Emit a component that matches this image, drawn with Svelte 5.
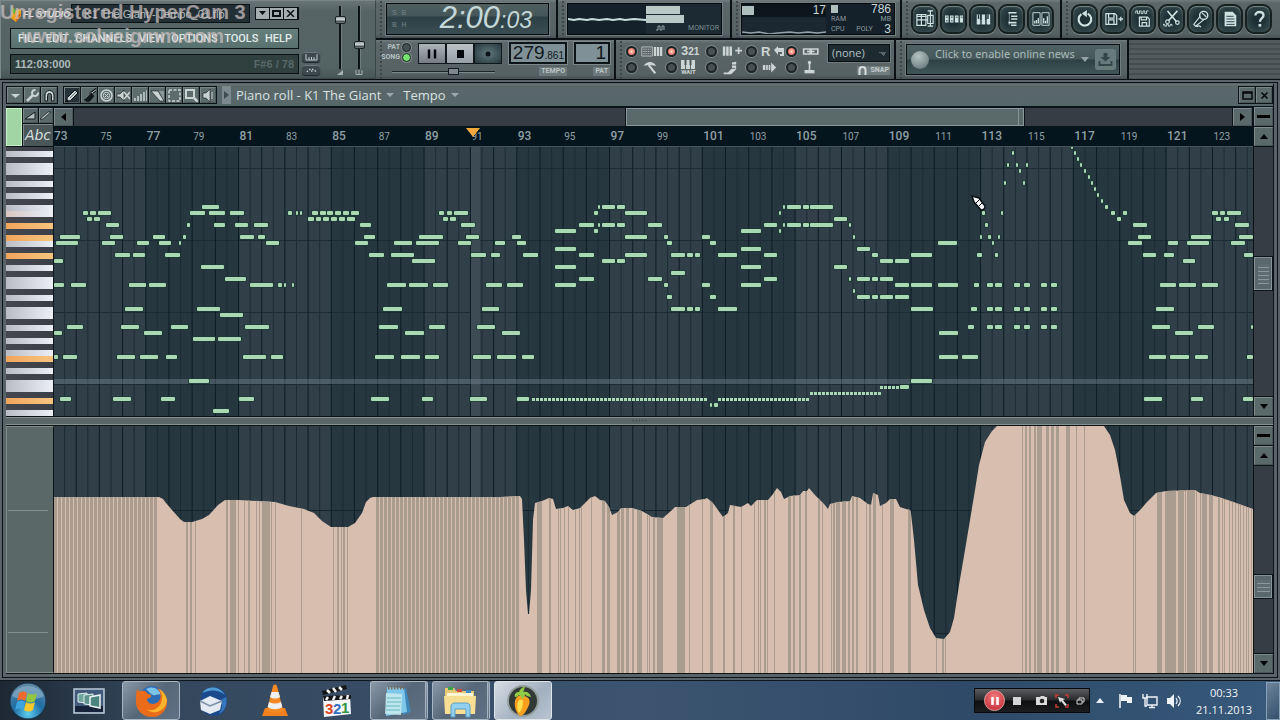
<script>
  // Key rows from the top of the visible range: w white, k black, o held, t tinted
  const keys = 'kwkwwkwkwkwtkokowkokwkwwkwkwwkwkwkwokwkwwkokw'.split('');

  const chordA = [[987, 993], [995, 1002], [1014, 1020], [1024, 1030], [1041, 1047], [1051, 1057]];
  const rows = {
    147: [[1071, 1072]],
    153: [[1012, 1014], [1074, 1075]],
    159: [[1077, 1078]],
    165: [[1007, 1008], [1016, 1017], [1026, 1028], [1080, 1082]],
    171: [[1019, 1020], [1084, 1085]],
    177: [[1088, 1089]],
    183: [[1004, 1005], [1023, 1025], [1091, 1092]],
    189: [[1094, 1096]],
    195: [[1097, 1099]],
    201: [[1101, 1103]],
    207: [[202, 219], [598, 600], [602, 615], [617, 625], [783, 785], [787, 801], [803, 809], [810, 833], [1105, 1108]],
    213: [[83, 88], [90, 96], [98, 111], [190, 205], [209, 225], [230, 244], [288, 292], [296, 298], [300, 301], [312, 318], [320, 326], [327, 333], [335, 341], [343, 349], [351, 359], [439, 444], [447, 452], [454, 468], [594, 598], [625, 647], [779, 781], [982, 985], [1001, 1003], [1111, 1115], [1123, 1127], [1212, 1218], [1220, 1225], [1227, 1241]],
    219: [[87, 92], [94, 100], [308, 314], [316, 321], [323, 329], [331, 337], [339, 345], [347, 355], [443, 448], [450, 456], [834, 847], [1117, 1121], [1216, 1221], [1224, 1229]],
    225: [[106, 119], [187, 190], [214, 225], [235, 248], [254, 268], [360, 371], [461, 475], [579, 594], [598, 600], [602, 615], [617, 625], [648, 662], [764, 777], [783, 785], [787, 801], [803, 809], [810, 833], [849, 851], [985, 988], [1133, 1147], [1235, 1249]],
    231: [[555, 576], [594, 598], [741, 761], [779, 781]],
    237: [[60, 80], [110, 123], [153, 165], [183, 186], [240, 254], [258, 265], [364, 375], [419, 443], [466, 479], [512, 521], [625, 647], [664, 668], [702, 710], [853, 855], [980, 982], [988, 991], [998, 999], [1138, 1151], [1191, 1211], [1239, 1253]],
    243: [[56, 78], [102, 115], [137, 149], [159, 171], [179, 181], [266, 279], [355, 368], [394, 412], [416, 439], [458, 471], [495, 505], [517, 526], [667, 672], [710, 716], [938, 957], [992, 994], [1128, 1142], [1168, 1178], [1187, 1209], [1231, 1245]],
    249: [[555, 576], [741, 761], [857, 870]],
    255: [[115, 130], [133, 145], [165, 180], [369, 384], [391, 414], [471, 486], [491, 500], [523, 538], [579, 594], [625, 647], [671, 685], [687, 693], [695, 700], [718, 737], [764, 777], [872, 878], [911, 932], [977, 982], [995, 998], [1143, 1156], [1164, 1174], [1244, 1253]],
    261: [[54, 63], [412, 435], [602, 615], [617, 625], [880, 893], [895, 909], [1183, 1195]],
    267: [[201, 224], [555, 576], [741, 761], [834, 847]],
    273: [[671, 685]],
    279: [[225, 246], [579, 594], [648, 662], [764, 777], [849, 850], [857, 870], [872, 878], [880, 893]],
    285: [[54, 64], [71, 86], [129, 146], [149, 166], [250, 273], [278, 282], [284, 285], [292, 294], [387, 406], [409, 428], [433, 448], [486, 502], [507, 523], [555, 576], [664, 668], [702, 710], [741, 761], [895, 909], [911, 932], [938, 958], [974, 979], ...chordA, [1160, 1176], [1179, 1196], [1202, 1218]],
    291: [[853, 855]],
    297: [[667, 672], [710, 716], [857, 870], [872, 878], [880, 893], [895, 909]],
    309: [[125, 143], [197, 220], [383, 402], [482, 499], [671, 685], [687, 693], [695, 700], [718, 737], [911, 933], [971, 977], ...chordA, [1156, 1174]],
    315: [[220, 243]],
    327: [[67, 83], [121, 139], [171, 188], [245, 269], [379, 398], [429, 445], [477, 495], [968, 974], ...chordA, [1152, 1170], [1198, 1214], [1251, 1253]],
    333: [[54, 62], [144, 162], [405, 424], [502, 520], [939, 958], [1175, 1193]],
    339: [[193, 215], [218, 241]],
    357: [[54, 58], [63, 77], [117, 135], [140, 158], [166, 177], [243, 266], [271, 283], [375, 394], [401, 420], [425, 439], [473, 491], [497, 516], [522, 534], [939, 958], [962, 978], [1149, 1166], [1170, 1189], [1195, 1208], [1247, 1253]],
    381: [[189, 209], [911, 932]],
    387: [[900, 909]],
    399: [[60, 71], [113, 131], [161, 175], [239, 254], [371, 389], [422, 433], [470, 487], [517, 529], [1144, 1162], [1191, 1203], [1243, 1253]],
    405: [[710, 712], [714, 718]],
    411: [[213, 229]]
  };
  const runs = [[532, 708, 399], [718, 808, 399], [810, 879, 393], [880, 898, 387]];
  const notes = [];
  for (const [y, list] of Object.entries(rows)) for (const [a, b] of list) notes.push([a, +y - 2, Math.max(b - a, 2)]);
  const ticks = [];
  for (const [a, b, y] of runs) for (let x = a; x < b; x += 4) ticks.push([x, y - 1]);

  const bar = 23.19;
  const x0 = 53;
  const bars = Array.from({ length: 52 }, (_, i) => x0 + i * bar);
  const shades = Array.from({ length: 7 }, (_, i) => x0 + (i * 8 + 4) * bar);
  const labels = Array.from({ length: 26 }, (_, i) => 73 + i * 2);

  const curve = '54,497 159,497 163,499 166,503 172,510 180,519 184,522 192,522 202,519 209,515 218,505 225,500 238,500 275,502 289,506 304,509 314,513 322,521 331,527 348,527 355,523 362,513 366,502 370,498 373,497 500,497 520,496 522,499 524,540 526,590 528,614 529,614 531,590 533,520 535,503 542,501 549,498 553,499 556,509 563,508 568,506 573,510 580,508 586,502 590,498 595,496 600,500 605,501 609,507 612,515 618,512 621,508 632,508 642,511 652,517 663,518 672,510 675,507 686,507 697,500 705,499 707,498 713,503 718,510 723,517 728,513 730,505 741,507 748,503 751,506 757,500 768,500 773,494 777,488 781,492 784,499 790,496 800,495 803,491 807,491 809,488 814,494 820,500 824,504 828,509 830,504 838,502 850,501 852,496 860,498 868,504 871,505 873,493 878,495 880,506 886,503 890,499 896,499 900,507 906,509 910,510 911,513 914,540 918,585 924,610 930,628 936,638 944,639 950,632 954,618 959,585 965,550 970,520 975,490 979,465 985,442 992,431 997,426 1104,426 1110,435 1115,450 1119,470 1124,500 1130,513 1134,516 1141,509 1147,502 1156,493 1166,491 1195,490 1200,493 1211,495 1222,498 1239,504 1253,509';
  const stripes = [[186, 2], [190, 2], [195, 1], [226, 2], [230, 6], [238, 1], [244, 1], [248, 2], [256, 1], [259, 1], [262, 8], [271, 1], [275, 1], [301, 1], [333, 1], [337, 2], [341, 1], [343, 2], [347, 1], [537, 5], [549, 2], [558, 1], [560, 1], [564, 1], [568, 1], [575, 1], [579, 1], [581, 1], [591, 1], [602, 3], [607, 3], [617, 3], [621, 3], [626, 3], [632, 2], [637, 5], [647, 1], [649, 1], [653, 2], [657, 6], [677, 8], [689, 1], [702, 1], [710, 3], [723, 2], [733, 2], [741, 1], [754, 1], [758, 1], [760, 1], [764, 2], [767, 1], [774, 1], [788, 3], [793, 2], [799, 2], [805, 2], [818, 2], [822, 1], [831, 1], [833, 2], [836, 4], [842, 4], [848, 2], [852, 2], [856, 2], [866, 1], [869, 2], [873, 3], [882, 1], [890, 4], [908, 3], [936, 1], [942, 2], [945, 1], [1022, 1], [1025, 2], [1029, 2], [1034, 2], [1037, 5], [1046, 3], [1051, 3], [1056, 3], [1066, 4], [1076, 1], [1084, 1], [1133, 1], [1135, 1], [1157, 5], [1165, 11], [1178, 6], [1185, 1], [1187, 8], [1196, 1], [1200, 1], [1202, 5], [1209, 4], [1218, 2], [1222, 1], [1224, 1], [1229, 1], [1232, 1], [1235, 1], [1238, 1], [1240, 1], [1243, 1], [1246, 1], [1248, 1], [1251, 1]];
  for (let x = 54; x < 156; x += 4) stripes.push([x, 3]);
  for (let x = 376; x < 520; x += 4) stripes.push([x, 3]);

  const s = 'fill="none" stroke="currentColor"';
  const f = 'fill="currentColor"';
  const tools = [
    ['Menu', `<path d="M3 6h9l-4.500 4z" ${f}/>`],
    ['Options', `<path d="M2 13l6-6" ${s} stroke-width="2.500"/><path d="M13 4.500a3 3 0 1 1-2.500-2.500" ${s} stroke-width="2"/>`],
    ['Snap', `<path d="M3 13V7a4.500 4.500 0 0 1 9 0v6H9.500V7.500a2 2 0 0 0-4 0V13z" ${f} stroke="#111b1f"/>`],
    ['Draw', `<path d="M1 14l1.500-4.500L10 2l3 3-7.500 7.500z" ${f} stroke="#0b1216"/><path d="M1 14l3-1-2-2z" fill="#0b1216"/><path d="M5 10l6-6" stroke="#6d7a7c"/>`],
    ['Paint', `<path d="M15 1L8 6" stroke="#0b1216" stroke-width="3"/><path d="M15 1L9 5.500" ${s}/><path d="M9 4l4 4-5 6c-3 1-5 0-7-3 3 0 5-3 8-7z" fill="#11191c" stroke="#7e8b8d" stroke-width=".6"/>`],
    ['Delete', `<circle cx="7.500" cy="7.500" r="5.500" ${s} stroke-width="1.500"/><circle cx="7.500" cy="7.500" r="3.200" ${s}/><path d="M6 6l3 3m0-3L6 9" ${s}/>`],
    ['Mute', `<path d="M1 6h3l4-4v11l-4-4H1z" ${f} stroke="#11191c" stroke-width=".6"/><path d="M8 4l6 7m0-7l-6 7" ${s} stroke-width="1.600"/>`],
    ['Velocity', `<path d="M2 13v-3M5 13V8M8 13V6M11 13V4M14 13V2" ${s} stroke-width="1.500"/>`],
    ['Slice', `<path d="M1 3h7l6 10h-4z" ${f} stroke="#11191c" stroke-width=".6"/><path d="M9 3h5v9z" fill="#8b9898"/>`],
    ['Select', `<rect x="2" y="2" width="11" height="11" ${s} stroke-width="1.500" stroke-dasharray="3 1.500"/>`],
    ['Zoom', `<rect x="2" y="2" width="8" height="8" ${s} stroke-width="2"/><path d="M10 10l4 4" ${s} stroke-width="2.500"/>`],
    ['Play', `<path d="M2 5h3l4-4v13l-4-4H2z" ${f} stroke="#11191c" stroke-width=".6"/><path d="M11 4v7" ${s}/>`]
  ];
  const windows = [
    ['Playlist', `<path d="M1 7h11M1 5h10v12H1zM1 11h12M6 5v12M13 1h6M16 1v17M13 18h6M13 6h6v9h-6z" ${s} stroke-width="1.300"/>`],
    ['Step sequencer', `<path d="M0 6h4v8H0zM5.500 6h4v8h-4zM11 6h4v8h-4zM16.500 6h4v8h-4z" ${f}/><path d="M1 8h2M6.500 8h2M12 8h2M17.500 8h2M1 12h2M6.500 12h2" stroke="#26393e"/>`],
    ['Piano roll', `<path d="M3 5h4v11H3zM8.500 5h4v11h-4zM14 5h4v11h-4z" ${f}/><path d="M7.500 5v6M13 5v6M5 5v5M15.500 5v5" stroke="#26393e" stroke-width="1.600"/>`],
    ['Browser', `<path d="M6 3h9M9 7h7M9 10h7M6 14h9M9 17h6" ${s} stroke-width="1.800"/><path d="M7 3v14" ${s} stroke-width=".6"/>`],
    ['Mixer', `<path d="M1 3h8v14H1zM11 3h8v14h-8z" ${s}/><path d="M3 15v-3M5 15v-4M7 15v-6M13 15V9M15 15v-3M17 15V7" ${s} stroke-width="1.400"/>`]
  ];
  const actions = [
    ['Undo', `<path d="M6 4.500A7 7 0 1 0 13 4" ${s} stroke-width="2.400"/><path d="M12 0v8L6.500 4z" ${f}/>`],
    ['Save new version', `<path d="M1 4h10l2 2v10H1zM4 4v5h6V4M4 16v-5h6v5" ${s} stroke-width="1.400"/><path d="M15 10h5M17.500 7.500v5" ${s} stroke-width="1.400"/>`],
    ['Render', `<path d="M2 4V1h2v3h2V1h2v3h2V1h2v3h2V1h2" ${s}/><path d="M6 8h9l2 2v8H6zM8 8v3h6V8M9 18v-4h5v4" ${s} stroke-width="1.300"/>`],
    ['Edit audio', `<path d="M5 1l10 12M16 1L6 12" ${s} stroke-width="1.800"/><circle cx="5" cy="13" r="2" ${s} stroke-width="1.300"/><circle cx="16" cy="14" r="2" ${s} stroke-width="1.300"/><path d="M0 18v-2h2v2h2v-2h2v2h2v-2h2v2" ${s}/>`],
    ['Record audio', `<circle cx="13" cy="6" r="4.500" ${s} stroke-width="1.600"/><path d="M9 7l-7 9 2 2 9-7M11 3l5 5M4 18c3 1 3-2 6 1" ${s} stroke-width="1.300"/>`],
    ['Project info', `<path d="M4 2h9l4 4v12H4z" ${f}/><path d="M6 7h8M6 10h9M6 13h9M6 16h9" stroke="#26393e"/>`],
    ['Help', `<path d="M6 6c0-5 9-5 9 0 0 3-4 3-4 7" ${s} stroke-width="2.600"/><path d="M9.500 15.500h3v3h-3z" ${f}/>`]
  ];
  const switches = [
    ['Typing keyboard', true, `<path d="M1 3h14v12H1z" ${s}/><path d="M3 6h10M3 9h10M3 12h10" ${s} stroke-dasharray="2 1"/><path d="M17 3h3v12h-3zM21 3h3v12h-3zM25 3h3v12h-3z" ${f}/>`],
    ['Countdown', true, '321'],
    ['Step edit', false, `<path d="M1 3h3v11H1zM5 3h3v11H5zM9 3h3v11H9z" ${f}/><path d="M16 8h8M20 4v8" ${s} stroke-width="2"/>`],
    ['Loop recording', false, 'R'],
    ['Multilink', true, `<path d="M2 6h8v6H2zM11 6h8v6h-8z" ${s} stroke-width="2"/><path d="M6 9h9" ${s} stroke-width="2"/>`],
    ['Metronome', false, `<path d="M2 7c4-6 11-6 15 0L9 6z" ${f}/><path d="M8 6l8 10" ${s} stroke-width="2.500"/>`],
    ['Wait for input', false, 'WAIT'],
    ['Blend notes', false, `<path d="M2 15h5l5-5V3l5-1v9l-6 6H2z" ${f}/><path d="M8 10h8M9 6h9" stroke="#4c585b"/>`],
    ['Auto scroll', false, `<path d="M1 6h3v6H1zM5 6h2v6H5zM8 6h2v6H8zM11 6V3l6 6-6 6v-3z" ${f}/>`],
    ['Joystick', false, `<path d="M3 12h12v4H3z" ${f}/><path d="M9 12V4" ${s} stroke-width="2"/><circle cx="9" cy="3" r="2" ${f}/>`]
  ];
  const menu = ['FILE', 'EDIT', 'CHANNELS', 'VIEW', 'OPTIONS', 'TOOLS', 'HELP'];
</script>

{#snippet icon(body, size, box)}
  <svg width={size} height={size} viewBox="0 0 {box} {box}" aria-hidden="true">{@html body}</svg>
{/snippet}

<div class="screen">
  <header>
    <section class="main-panel">
      <div class="console">
        <div class="caption">
          <svg width="12" height="18" viewBox="0 0 12 18"><path d="M2 2l4 3 5-1v7l-5 6-5-4z" fill="#f0a21c"/><path d="M1 2l5 3-2 5z" fill="#49b13c"/><path d="M7 10l4-1-5 8z" fill="#d8451c"/></svg>
          <strong>FL STUDIO</strong>
          <div class="file">K1 The Giant - Tempo_01.flp</div>
          <div class="winbtns">
            <button aria-label="Minimize"><svg width="9" height="7" viewBox="0 0 9 7"><path d="M1 1h7L4.500 5z" fill="#0c1316"/></svg></button>
            <button aria-label="Maximize"><svg width="9" height="7" viewBox="0 0 9 7"><path d="M1 1h7v5H1z" fill="none" stroke="#0c1316" stroke-width="2"/></svg></button>
            <button aria-label="Close"><svg width="9" height="7" viewBox="0 0 9 7"><path d="M1 0l7 7M8 0L1 7" stroke="#0c1316" stroke-width="1.500"/></svg></button>
          </div>
        </div>
        <nav>{#each menu as m}<button>{m}</button>{/each}</nav>
        <div class="hint"><span>112:03:000</span><span class="note-name">F#6 / 78</span></div>
      </div>
      <div class="knobs">
        <button aria-label="Keyboard"><svg width="13" height="7" viewBox="0 0 13 7"><path d="M1 0v6h11V0M4 3v3M6.500 3v3M9 3v3" fill="none" stroke="#b9c6c8"/></svg></button>
        <button aria-label="Tempo dial"><svg width="13" height="8" viewBox="0 0 13 8"><path d="M2 6a5 5 0 0 1 9 0M6 5h2" fill="none" stroke="#b9c6c8" stroke-width="1.500" stroke-dasharray="1.500 1.500"/></svg></button>
      </div>
      <div class="faders">
        <div class="fader"><i style="top:16%"></i><svg width="8" height="5" viewBox="0 0 8 5"><path d="M1 5h6V0z" fill="#a5b2b4"/></svg></div>
        <div class="fader"><i style="top:52%"></i><svg width="8" height="5" viewBox="0 0 8 5"><path d="M1 0v4.500h6V0M4 0v4" fill="none" stroke="#a5b2b4"/></svg></div>
      </div>
    </section>

    <div class="decks">
      <div class="deck">
        <section class="panel time-panel">
          <div class="lcd time"><span class="modes"><i>S B</i><i>B H</i></span><span class="clockface">2:00<small>:03</small></span></div>
        </section>
        <section class="panel scope-panel">
          <div class="lcd scope">
            <svg width="78" height="28" viewBox="0 0 78 28"><path d="M0 14l6 1 5-1 8 1 5-1 7 1 8-1 6 1 7-1 5 1 9-1 12 1" fill="none" stroke="#c9dddd" stroke-width="2"/></svg>
            <div class="meters"><b style="width:45%"></b><b style="width:50%"></b><p><svg width="9" height="6" viewBox="0 0 9 6"><path d="M0 5h2V1h2v4h2V1h2v4" fill="none" stroke="#93a2a8"/></svg><span>MONITOR</span></p></div>
          </div>
        </section>
        <section class="panel cpu-panel">
          <div class="lcd cpu">
            <div class="graph"><p><b></b><span>17</span></p><svg viewBox="0 0 84 15" width="84" height="15"><path d="M0 11l9 1 8-1 10 2 9-1 12-1 8 1 10-1 9 1 9-1" fill="none" stroke="#93a2a8" stroke-width="1.500"/></svg></div>
            <div class="stats"><p><b></b><span>786</span></p><p><i>RAM</i><i>MB</i></p><p><i>CPU</i><i>POLY</i><span>3</span></p></div>
          </div>
        </section>
        <section class="panel round left-round">{#each windows as [n, b]}<button aria-label={n}>{@render icon(b, 18, 20)}</button>{/each}</section>
        <section class="panel round grow">{#each actions as [n, b]}<button aria-label={n}>{@render icon(b, 18, 20)}</button>{/each}</section>
      </div>
      <div class="deck">
        <section class="panel transport">
          <div class="modes-col">
            <div class="mode"><span>PAT</span><i class="led off"></i></div>
            <div class="mode"><span>SONG</span><i class="led green"></i></div>
          </div>
          <div class="play">
            <button aria-label="Pause"><svg width="12" height="12" viewBox="0 0 12 12"><path d="M3 1.500v9M9 1.500v9" stroke="#05090b" stroke-width="2.500"/></svg></button>
            <button aria-label="Stop" class="lit"><svg width="12" height="12" viewBox="0 0 12 12"><path d="M3 2h7v8H3z" fill="#05090b"/></svg></button>
            <button aria-label="Record" class="rec"><svg width="12" height="12" viewBox="0 0 12 12"><circle cx="6" cy="6" r="2.500" fill="#0b1418"/></svg></button>
            <div class="pos"><i></i></div>
          </div>
          <div class="readout"><div class="lcd2 tempo">279<small>.861</small></div><span>TEMPO</span></div>
          <div class="readout"><div class="lcd2 pat">1</div><span>PAT</span></div>
        </section>
        <section class="panel switches">
          <div class="sw-grid">
            {#each switches as [n, on, b]}
              <button aria-label={n} aria-pressed={on}>
                <i class="led" class:red={on} class:off={!on}></i>
                {#if b === '321'}<span class="t321">3<small>2</small><small>1</small></span>
                {:else if b === 'R'}<span class="t321">R</span><svg width="11" height="12" viewBox="0 0 11 12"><path d="M0 4l4-4v2h6v8H6V8h2V6H4v3z" fill="currentColor"/></svg>
                {:else if b === 'WAIT'}<span class="wait"><svg width="15" height="9" viewBox="0 0 15 9"><path d="M0 0h4v9H0zM5 0h4v9H5zM10 0h4v9h-4z" fill="currentColor"/><path d="M4.500 0v5M9.500 0v5" stroke="#4c585b" stroke-width="2"/></svg>WAIT</span>
                {:else}<svg width="22" height="15" viewBox="0 0 {n === 'Typing keyboard' ? 29 : 24} 18">{@html b}</svg>{/if}
              </button>
            {/each}
          </div>
          <div class="snap">
            <select aria-label="Snap"><option>(none)</option></select>
            <span><svg width="9" height="9" viewBox="0 0 9 9"><path d="M1.500 9V4a3 3 0 0 1 6 0v5" fill="none" stroke="#d5dede" stroke-width="2"/></svg>SNAP</span>
          </div>
        </section>
        <section class="panel news-panel">
          <div class="news">
            <i class="globe"></i><button class="news-text">Click to enable online news</button>
            <svg width="8" height="5" viewBox="0 0 8 5"><path d="M0 0h8L4 5z" fill="#93a4a4"/></svg>
            <button class="dl" aria-label="Download"><svg width="15" height="15" viewBox="0 0 15 15"><path d="M5.500 1h4v4h3l-5 4.500L2.500 5h3z" fill="#33464a"/><path d="M1.500 9v4h12V9" fill="none" stroke="#33464a" stroke-width="2"/></svg></button>
          </div>
        </section>
        <div class="empty"></div>
      </div>
    </div>
    <div class="watermark"><b>Unregistered HyperCam 3</b><b class="site">www.solveigmm.com</b></div>
  </header>

  <main>
    <div class="titlebar">
      <div class="group">{#each tools.slice(0, 3) as [n, b]}<button aria-label={n}>{@render icon(b, 15, 15)}</button>{/each}</div>
      <div class="group">{#each tools.slice(3) as [n, b], i}<button aria-label={n} class:down={i === 0}>{@render icon(b, 15, 15)}</button>{/each}</div>
      <span class="jump"></span>
      <h1>Piano roll - K1 The Giant<i></i>Tempo<i></i></h1>
      <div class="group end">
        <button aria-label="Maximize"><svg width="11" height="9" viewBox="0 0 11 9"><path d="M1 1h9v7H1zM1 2h9" fill="none" stroke="#05090b" stroke-width="1.500"/></svg></button>
        <button aria-label="Close"><svg width="9" height="9" viewBox="0 0 9 9"><path d="M1.500 1.500l6 6m0-6l-6 6" stroke="#05090b" stroke-width="1.500"/></svg></button>
      </div>
    </div>

    <div class="corner">
      <span class="swatch"></span>
      <button aria-label="Slide"><svg width="11" height="9" viewBox="0 0 11 9"><path d="M0 8L10 1v7z" fill="#b5c2c1" stroke="#10191c"/></svg></button>
      <button aria-label="Porta"><svg width="11" height="9" viewBox="0 0 11 9"><path d="M0 8L8 1h3L3 8z" fill="#b5c2c1" stroke="#10191c" stroke-width=".7"/></svg></button>
      <button class="abc">Abc</button>
    </div>
    <div class="hscroll">
      <button aria-label="Scroll left"><svg width="5" height="8" viewBox="0 0 5 8"><path d="M5 0v8L0 4z"/></svg></button>
      <div class="track"><span></span></div>
      <button aria-label="Scroll right"><svg width="5" height="8" viewBox="0 0 5 8"><path d="M0 0v8l5-4z"/></svg></button>
    </div>
    <button class="sq" aria-label="Zoom"><svg width="13" height="3" viewBox="0 0 13 3"><path d="M0 0h13v3H0z"/></svg></button>
    <div class="ruler">{#each labels as n, i}<span class:small={i % 2}>{n}</span>{/each}<i class="marker"></i></div>
    <button class="sq" aria-label="Scroll up"><svg width="8" height="5" viewBox="0 0 8 5"><path d="M0 5h8L4 0z"/></svg></button>

    <div class="keys">{#each keys as k}<i class={k}></i>{/each}</div>
    <div class="roll">
      <svg viewBox="54 147 1199 269" preserveAspectRatio="none">
        <rect x="54" y="147" width="1199" height="269" fill="#303f48" />
        {#each shades as x}<rect {x} y="147" width={bar * 4} height="269" fill="#273740" />{/each}
        <path d="M54 168.500h1199M54 240.500h1199M54 312.500h1199M54 384.500h1199" stroke="#1c2b34" />
        <rect x="471" y="147" width="9" height="269" fill="#3c4b54" />
        {#each bars as x}
          <path d="M{x} 147v269" stroke="#0d1c25" />
          <path d="M{x + bar / 2} 147v269" stroke="#1e2d36" />
        {/each}
        <rect x="54" y="379" width="1199" height="5" fill="#8496a4" opacity=".35" />
        {#each notes as [x, y, w]}
          <rect x={x - 1} y={y - 1} width={w + 2} height="6" rx="1" fill="#1c3a35" opacity=".7" />
          <rect {x} {y} width={w} height="4" rx="1" fill="#a9d8b2" />
        {/each}
        {#each ticks as [x, y]}<rect {x} {y} width="3" height="3" fill="#a9d8b2" />{/each}
      </svg>
      <svg class="pencil" width="16" height="16" viewBox="0 0 16 16"><path d="M1 1l2 6 7 8c3 0 4-2 4-4L8 3z" fill="#f4f6f8" stroke="#0b1216" stroke-width="1.500"/><path d="M5 8l4-4M8 11l4-4" stroke="#0b1216"/></svg>
    </div>
    <div class="vscroll"><div class="track"><span class="t1"></span></div><button class="sq" aria-label="Scroll down"><svg width="8" height="5" viewBox="0 0 8 5"><path d="M0 0h8L4 5z"/></svg></button></div>

    <div class="splitter">·····</div>

    <div class="lane-side"></div>
    <div class="lane">
      <svg viewBox="54 426 1199 247" preserveAspectRatio="none">
        <clipPath id="tempo"><polygon points="54,673 {curve} 1253,673" /></clipPath>
        <rect x="54" y="426" width="1199" height="247" fill="#303f48" />
        {#each shades as x}<rect {x} y="426" width={bar * 4} height="247" fill="#273740" />{/each}
        <rect x="471" y="426" width="9" height="247" fill="#3c4b54" />
        {#each bars as x}
          <path d="M{x} 426v247" stroke="#0d1c25" />
          <path d="M{x + bar / 2} 426v247" stroke="#1b2a33" />
        {/each}
        <path d="M54 510.500h1199M54 633.500h1199" stroke="#14232c" />
        <g clip-path="url(#tempo)">
          <rect x="54" y="426" width="1199" height="247" fill="#d7beae" />
          {#each stripes as [x, w]}<rect {x} y="426" width={w} height="247" fill="#aa9d8f" />{/each}
        </g>
      </svg>
    </div>
    <div class="vscroll">
      <button class="sq" aria-label="Zoom lane"><svg width="13" height="3" viewBox="0 0 13 3"><path d="M0 0h13v3H0z"/></svg></button>
      <button class="sq" aria-label="Lane up"><svg width="8" height="5" viewBox="0 0 8 5"><path d="M0 5h8L4 0z"/></svg></button>
      <div class="track"><span class="t2"></span></div>
      <button class="sq" aria-label="Lane down"><svg width="8" height="5" viewBox="0 0 8 5"><path d="M0 0h8L4 5z"/></svg></button>
    </div>
  </main>

  <footer>
    <button class="task start" aria-label="Start">
      <svg width="38" height="38" viewBox="0 0 38 38">
        <defs><radialGradient id="orb" cx=".5" cy=".85" r=".8"><stop offset="0" stop-color="#5fd0ee"/><stop offset=".5" stop-color="#1f6ea3"/><stop offset="1" stop-color="#5d87a6"/></radialGradient></defs>
        <circle cx="19" cy="19" r="18" fill="url(#orb)" stroke="#1a3046"/><path d="M3 14a17 15 0 0 1 32 0c-9 5-22 5-32 0z" fill="#b9d3e2" opacity=".4"/>
        <path d="M10 11c3-2 5-2 8 0l-2 8c-3-2-5-2-8 0z" fill="#ef6a2c"/><path d="M19 11c3 2 6 2 9 0l-2 8c-3 2-6 2-9 0z" fill="#93c740"/><path d="M8 20c3-2 5-2 8 0l-2 8c-3-2-5-2-8 0z" fill="#3fa4dd"/><path d="M17 20c3 2 6 2 9 0l-2 8c-3 2-6 2-9 0z" fill="#fbc82c"/>
      </svg>
    </button>
    <button class="task" aria-label="Window switcher">
      <svg width="32" height="26" viewBox="0 0 32 26"><path d="M1 1h30v24H1z" fill="#41597a" stroke="#bccbd9" stroke-width="1.500"/><path d="M2 18h28v6H2z" fill="#17233a"/><path d="M5 6l9-1v10l-9-1z" fill="#6ea59c" stroke="#e6efef"/><path d="M11 7l9-1v11l-9-1z" fill="#5c938c" stroke="#e6efef"/><path d="M17 9l10-2v13l-10-2z" fill="#4c8580" stroke="#eef5f5" stroke-width="1.500"/></svg>
    </button>
    <button class="task open" aria-label="Firefox">
      <svg width="34" height="34" viewBox="0 0 34 34"><circle cx="18" cy="15" r="13" fill="#2d6db4"/><path d="M12 5c6-4 14 0 15 6-3-2-5 1-8 0s-4-4-7-6z" fill="#7cc3ea"/><path d="M3 5c1 2 3 3 5 2 2-1 4 0 6 3 2 0 4 1 3 3l-4 2c0 5 7 7 12 2 3-5 1-10-2-13 6 2 10 8 10 14 0 9-7 15-15 15S2 27 2 18C2 13 2 9 3 5z" fill="#ea6c1b"/><path d="M25 5c5 6 4 15-2 19-4 3-9 3-12 0 8 8 21 4 22-8-1-5-4-9-8-11z" fill="#fbb42c"/></svg>
    </button>
    <button class="task" aria-label="Thunderbird">
      <svg width="32" height="32" viewBox="0 0 32 32"><path d="M4 10C8 1 22-1 28 8c4 7 2 17-5 22-7 2-15 0-19-6z" fill="#1b4a8c"/><path d="M5 8C11 0 23 1 28 10c-8-6-15-5-23-2z" fill="#4f9bd5"/><path d="M29 12c2 7-1 14-7 17 3-5 4-10 2-14z" fill="#3678bb"/><path d="M3 16l10-5 12 5-2 9-10 4-9-4z" fill="#e3eaf1"/><path d="M3 16l10 5 12-5" fill="none" stroke="#7c90a6" stroke-width="1.500"/></svg>
    </button>
    <button class="task" aria-label="VLC">
      <svg width="28" height="34" viewBox="0 0 28 34"><path d="M4 24h20l3 8H1z" fill="#f2801e"/><path d="M12 2c1-2 3-2 4 0l6 24c-4 4-12 4-16 0z" fill="#f58a24"/><path d="M10.500 8h7l1.500 5c-3 2-7 2-10 0zM8 18c4 2 8 2 12 0l1.300 5c-4 3-11 3-14.600 0z" fill="#eef0f1"/></svg>
    </button>
    <button class="task" aria-label="Media Player Classic">
      <svg width="32" height="34" viewBox="0 0 32 34"><path d="M2 13l27-2 1 19-27 3z" fill="#f5f6f7"/><path d="M1 7L25 1l1 4L2 11zM2 12l28-1v4L3 17z" fill="#131517"/><path d="M6 6l3 3M12 4l3 4M18 3l3 3M7 13l-2 3M14 12l-2 4M21 12l-2 3M27 11l-1 4" stroke="#f2f3f3" stroke-width="2.500"/><text x="4" y="30" font-family="Liberation Sans" font-weight="700" font-size="15" fill="#da4625">3</text><text x="12" y="30" font-family="Liberation Sans" font-weight="700" font-size="15" fill="#3270c0">2</text><text x="20" y="29" font-family="Liberation Sans" font-weight="700" font-size="15" fill="#359440">1</text></svg>
    </button>
    <button class="task open stack" aria-label="Notepad">
      <svg width="30" height="34" viewBox="0 0 30 34"><path d="M17 5l6-1 5 24-8 3z" fill="#3f87b8"/><path d="M4 3l17 1 3 24-21 4z" fill="#80c8ea"/><path d="M3 9l16 1-1 21-16-1z" fill="#c8ecee" opacity=".85"/><path d="M4 14h14M4 18h14M3 22h14M3 26h14" stroke="#6cb5bf"/><path d="M5 4h16" stroke="#7b6a50" stroke-width="3" stroke-dasharray="1.500 1.500"/></svg>
    </button>
    <button class="task open stack" aria-label="Explorer">
      <svg width="34" height="34" viewBox="0 0 34 34"><path d="M2 4h9l2 3h18v22H2z" fill="#e9cb77"/><path d="M4 9h26v5H4z" fill="#fff7d3"/><path d="M1 12h32l-1 18H2z" fill="#f6de93"/><path d="M5 3h5v3H5z" fill="#38a34a"/><path d="M14 5h5v3h-5z" fill="#cb4d3a"/><path d="M23 6h5v3h-5z" fill="#4188c2"/><path d="M8 33V22c0-2 2-3 4-3h11c2 0 4 1 4 3v11h-4v-8H12v8z" fill="#93cfee" stroke="#5b9ec6"/></svg>
    </button>
    <button class="task open bright" aria-label="FL Studio">
      <svg width="34" height="34" viewBox="0 0 34 34"><circle cx="17" cy="17" r="15" fill="#303936" stroke="#929d9b" stroke-width="2"/><path d="M9 17c1-5 5-7 9-5 6 1 7 6 4 11-2 5-5 9-8 9-4-3-6-10-5-15z" fill="#f6a01e"/><path d="M12 18c2-3 4-3 5-1 0 5-1 9-4 12-2-2-2-7-1-11z" fill="#ffe04d"/><path d="M9 13c-1-3 1-5 4-5 1-3 3-5 6-5-1 2-1 4-2 5 4-1 7 1 8 5-3-1-5-1-6-3 0 2-1 4-3 5-1-2-1-3-3-4-1 1-2 2-4 2z" fill="#92cb45"/></svg>
    </button>
    <div class="spacer"></div>
    <div class="recorder">
      <button class="pause" aria-label="Pause recording"><svg width="10" height="10" viewBox="0 0 10 10"><path d="M2.500 1v8M7.500 1v8" stroke="#fff" stroke-width="2.500"/></svg></button>
      <button aria-label="Stop recording"><svg width="8" height="8" viewBox="0 0 8 8"><path d="M0 0h8v8H0z" fill="#d5d5d5"/></svg></button>
      <button class="shot" aria-label="Snapshot"><svg width="11" height="9" viewBox="0 0 11 9"><path d="M0 1h4l1-1h3l1 1h2v8H0z" fill="#dbdbdb"/><circle cx="6" cy="5" r="2.300" fill="#222"/></svg></button>
      <button aria-label="Region"><svg width="14" height="14" viewBox="0 0 14 14"><path d="M1 4V1h3M10 1h3v3M13 10v3h-3M4 13H1v-3" fill="none" stroke="#c33a35" stroke-width="1.500"/><path d="M3 3l7 2-2 1 4 5-2 1-4-5-1 2z" fill="#ddd"/></svg></button>
      <button aria-label="Restore"><svg width="9" height="8" viewBox="0 0 9 8"><path d="M3 3V1h5v4H6M1 3h5v4H1z" fill="none" stroke="#d5d5d5"/></svg></button>
    </div>
    <div class="tray">
      <svg width="8" height="5" viewBox="0 0 8 5"><path d="M0 5h8L4 0z" fill="#eaf2f8"/></svg>
      <svg width="16" height="16" viewBox="0 0 16 16"><path d="M2 1v14" stroke="#eef3f7" stroke-width="1.600"/><path d="M3 2h6v2h5v6H9V8H3z" fill="#eef3f7"/></svg>
      <svg width="16" height="16" viewBox="0 0 16 16"><path d="M5 4h10v8H5zM10 12v2M7 14.500h6" fill="none" stroke="#eef3f7" stroke-width="1.400"/><path d="M1 1v4h4V1M3 5v8h2" fill="none" stroke="#eef3f7" stroke-width="1.400"/></svg>
      <svg width="16" height="16" viewBox="0 0 16 16"><path d="M1 5h3l4-4v14l-4-4H1z" fill="#eef3f7"/><path d="M10 5c1.500 2 1.500 4 0 6M12 3c3 3 3 7 0 10" fill="none" stroke="#eef3f7" stroke-width="1.200"/></svg>
    </div>
    <div class="clock"><span>00:33</span><span>21.11.2013</span></div>
    <button class="peek" aria-label="Show desktop"></button>
  </footer>
</div>

<style>
  :global(body) { margin: 0; background: #3b4547; }
  * { box-sizing: border-box; }
  button { padding: 0; border: 0; background: none; color: inherit; font: inherit; display: flex; align-items: center; justify-content: center; }
  svg { display: block; flex: none; }
  p { margin: 0; }
  i { font-style: normal; }
  .screen { display: flex; flex-direction: column; height: 100vh; min-width: 1280px; font-family: "Open Sans", "Noto Sans", sans-serif; overflow: hidden; }

  header { position: relative; display: flex; height: 80px; flex: none; background: #0a1013; color: #c3cfd0; }
  .main-panel { display: flex; width: 376px; height: 79px; padding: 3px 8px 0 9px; gap: 3px; background: linear-gradient(#687476, #566465 10px, #546363 66px, #485556); border: 1px solid #7b8789; border-right-color: #3a4547; border-bottom-color: #3a4547; }
  .console { width: 289px; display: flex; flex-direction: column; gap: 5px; flex: none; }
  .caption { display: flex; align-items: center; height: 19px; gap: 1px; }
  .caption strong { font: italic 700 9px/12px "Liberation Sans", sans-serif; white-space: nowrap; color: #e3e8e8; }
  .file { flex: 1; height: 19px; padding: 2px 0 0 12px; font: 11px/14px "Liberation Sans", sans-serif; color: #aebcbe; background: #222f34; border: 1px solid #0b1114; white-space: nowrap; }
  .winbtns { display: flex; margin-left: 4px; border: 1px solid #0b1114; background: #0b1114; }
  .winbtns button { width: 13px; height: 11px; margin-right: 1px; background: #a2aeaf; }
  nav { display: flex; align-items: center; justify-content: space-between; height: 21px; padding: 0 6px 0 7px; border: 1px solid #0b1114; background: linear-gradient(#68807d, #58706e); }
  nav button { font: 500 11px/19px "Roboto", sans-serif; color: #e1ebea; }
  .hint { display: flex; justify-content: space-between; height: 20px; padding: 0 4px; border: 1px solid #0b1114; background: #30403f; font: 700 11px/18px "Liberation Sans", sans-serif; color: #aebbbb; }
  .note-name { color: #596868; }
  .knobs { display: flex; flex-direction: column; justify-content: flex-end; gap: 3px; padding-bottom: 3px; }
  .knobs button { width: 18px; height: 10px; border-radius: 3px; background: #3c484b; box-shadow: 0 1px 1px #1c2527, inset 0 1px #6b7779; }
  .faders { display: flex; gap: 11px; margin-left: 13px; }
  .fader { position: relative; width: 8px; height: 72px; padding-top: 66px; background: linear-gradient(90deg, #0c1316 2px, #717d7f 2px 3px, transparent 3px) 3px 2px / 5px 63px no-repeat; }
  .fader i { position: absolute; left: -1px; width: 11px; height: 8px; background: linear-gradient(#9ca7aa, #d1d8d8 3px, #3e494c 4px, #6f7b7f); border: 1px solid #1a2326; border-radius: 2px; }

  .decks { flex: 1; min-width: 0; display: flex; flex-direction: column; gap: 2px; }
  .deck { display: flex; gap: 2px; height: 38px; }
  .deck + .deck { height: 39px; }
  .panel { display: flex; align-items: center; height: 100%; background: radial-gradient(circle, #3d4749 0 1px, transparent 1px) 3px 4px / 4px 4px repeat-y, linear-gradient(#707c7e, #5c6769 3px, #566163 34px, #485254); flex: none; }
  .grow { flex: 1; }
  .lcd { height: 32px; border: 1px solid #06090b; background: #14202a; box-shadow: 0 0 0 1px #707c7e; color: #c7d5d6; }
  .time-panel { width: 180px; padding-left: 10px; }
  .time { width: 163px; display: flex; align-items: center; justify-content: space-between; padding: 0 16px 0 5px; background: linear-gradient(#50605f, #45565a 12px, #2d4045 13px, #3a4d52); }
  .modes { display: flex; flex-direction: column; gap: 4px; font: 8px/8px "Liberation Mono", monospace; color: #718184; }
  .clockface { font: italic 31px/30px "Liberation Sans", sans-serif; color: #c4d7d8; }
  .clockface small { font-size: 23px; }
  .scope-panel { width: 172px; padding-left: 9px; }
  .scope { width: 155px; display: flex; align-items: center; }
  .meters { flex: 1; height: 100%; padding: 2px 0; background: #1b2a33; display: flex; flex-direction: column; gap: 1px; }
  .meters b { height: 9px; background: #b8c9c6; }
  .meters p { display: flex; align-items: center; justify-content: space-between; font: 7px/8px "Roboto", sans-serif; color: #7d8c90; padding: 0 2px 0 10px; }
  .cpu-panel { width: 168px; padding-left: 9px; }
  .cpu { width: 154px; display: flex; gap: 5px; overflow: hidden; }
  .graph { width: 84px; background: #1b2831; }
  .graph p, .stats p { display: flex; justify-content: space-between; height: 10px; font: 12px/11px "Liberation Sans", sans-serif; }
  .graph p { height: 13px; margin-bottom: 4px; background: #0d161c; align-items: center; }
  .graph b { width: 12px; height: 9px; background: #aebfbe; }
  .stats { flex: 1; padding-right: 3px; }
  .stats p { align-items: center; }
  .stats b { width: 7px; height: 8px; background: #aebfbe; }
  .stats i { font: 7px/8px "Roboto", sans-serif; color: #8c9a9e; }
  .round { gap: 2px; padding-left: 9px; }
  .left-round { width: 158px; }
  .round button { width: 27px; height: 30px; border-radius: 9px; color: #cfe2e0; background: radial-gradient(#1e3035 30%, #2d4044 65%, #46585b); border: 2px solid #16211f; box-shadow: inset 0 1px 1px #7a898b, 0 1px #7d898b; }

  .transport { width: 238px; gap: 7px; padding: 0 6px 0 8px; align-items: flex-start; }
  .modes-col { width: 27px; padding-top: 3px; display: flex; flex-direction: column; gap: 1px; align-items: flex-end; flex: none; }
  .mode { display: flex; align-items: center; gap: 2px; font: 700 7px/9px "Roboto", sans-serif; color: #b5c1c2; }
  .led { display: block; width: 11px; height: 11px; border-radius: 50%; border: 2px solid #1a2325; box-shadow: 0 0 0 1px #7c888a; flex: none; }
  .mode .led { width: 9px; height: 9px; border-width: 1px; }
  .off { background: #465154; }
  .green { background: #76e56f; }
  .red { background: radial-gradient(#ffd5c8, #f08070 60%, #a8453e); }
  .play { display: flex; flex: none; padding-top: 3px; position: relative; }
  .play button { width: 28px; height: 21px; border: 1px solid #10181b; background: linear-gradient(#adb5b8, #747e83); }
  .play .lit { background: linear-gradient(#bcc3c7, #969fa4); }
  .play .rec { background: radial-gradient(#5f777c, #26383e); }
  .pos { position: absolute; left: -26px; top: 31px; width: 103px; height: 2px; background: #1b2629; border-bottom: 1px solid #7e8a8c; }
  .pos i { position: absolute; left: 56px; top: -3px; width: 11px; height: 7px; background: #7d888c; border: 1px solid #131b1e; }
  .readout { display: flex; flex: none; flex-direction: column; align-items: flex-end; gap: 3px; padding-top: 2px; font: 700 7px/9px "Roboto", sans-serif; color: #bbc6c7; }
  .readout span { padding: 0 2px; background: #6d787b; }
  .lcd2 { height: 22px; border: 2px solid #0d1417; background: #7f9097; color: #10191e; font: 19px/18px "Liberation Sans", sans-serif; text-align: right; box-shadow: 0 0 0 1px #7b8789; padding: 0 2px; white-space: nowrap; }
  .lcd2 small { font-size: 10px; }
  .tempo { width: 58px; padding: 0 1px 0 0; }
  .pat { width: 36px; }
  .switches { width: 278px; padding: 0 6px 0 8px; gap: 4px; }
  .sw-grid { display: grid; grid-template-columns: repeat(5, 40px); grid-template-rows: 16px 16px; }
  .sw-grid button { justify-content: flex-start; gap: 4px; padding-left: 2px; color: #ccd4d4; }
  .t321 { font: 700 13px/14px "Liberation Sans", sans-serif; }
  .t321 small { font-size: 10px; }
  .wait { font: 700 6px/6px "Roboto", sans-serif; }
  .snap { display: flex; flex-direction: column; align-items: flex-end; gap: 4px; }
  .snap select { appearance: none; width: 62px; height: 18px; padding: 0 3px; border: 1px solid #080d0f; border-radius: 0; color: #b5c1c3; background: conic-gradient(from -45deg at 50% 100%, #56666b 90deg, transparent 0) 50px 7px / 8px 4px no-repeat, #1d2b31; font: 11px/16px "Open Sans", sans-serif; box-shadow: 0 0 0 1px #6f7b7d; }
  .snap span { display: flex; gap: 3px; padding: 0 1px; font: 700 7px/9px "Roboto", sans-serif; background: #717c7f; color: #c1cbcc; }
  .news-panel { width: 231px; padding-left: 10px; }
  .news { display: flex; align-items: center; width: 214px; height: 31px; border: 1px solid #080d0f; box-shadow: 0 0 0 1px #6f7b7d; padding: 0 4px; gap: 6px; background: linear-gradient(#4f6161, #46585a 14px, #2e4245 15px, #405656); }
  .globe { width: 18px; height: 18px; border-radius: 50%; background: radial-gradient(circle at 40% 30%, #b5c2c2, #7f8f8f 60%, #526465); flex: none; }
  .news-text { flex: 1; align-self: flex-start; justify-content: flex-start; font-family: "Noto Sans", sans-serif; font-size: 11px; line-height: 17px; color: #a9bbba; white-space: nowrap; }
  .dl { width: 21px; height: 21px; border-radius: 3px; background: #687b7b; flex: none; }
  .empty { flex: 1; background: repeating-linear-gradient(#525c5f 0 3px, #444e51 3px 5px); }
  .watermark { position: absolute; left: 0; top: 0; display: flex; flex-direction: column; align-items: center; color: #cbbfc0; opacity: .72; font: 20px/24px "Liberation Sans", sans-serif; pointer-events: none; white-space: nowrap; }

  main { flex: 1; min-height: 0; display: grid; grid-template-columns: 48px minmax(0, 1fr) 20px; grid-template-rows: 23px 20px 20px minmax(0, 269fr) 10px minmax(0, 247fr); padding: 0 1px 1px 0; border: solid #59646a; border-width: 4px 6px 6px 6px; outline: 1px solid #0b1114; outline-offset: -3px; background: #0b1316; }
  .titlebar { grid-column: 1 / -1; display: flex; align-items: center; gap: 5px; background: linear-gradient(#6a7779, #5a6769 2px, #56676a); border-bottom: 1px solid #0b1316; }
  .group { display: flex; gap: 1px; padding: 1px; background: #0b1316; }
  .group button { width: 16px; height: 16px; background: #5c6b6c; color: #c9d3d2; border: solid 1px #788687; border-right-color: #4a585a; border-bottom-color: #4a585a; overflow: hidden; }
  .group .down { background: #26343a; }
  .end { margin-left: auto; }
  .jump { width: 9px; height: 18px; background: #7d8a8b; }
  .jump::before { content: ""; display: block; margin: 5px 2px; border-left: 5px solid #3e4c4f; border-block: 4px solid transparent; }
  h1 { margin: 0; font-weight: 400; font-size: 13px; line-height: 18px; color: #d9e1e0; display: flex; align-items: center; gap: 5px; }
  h1 i { margin-right: 4px; border-top: 4px solid #9caaaa; border-inline: 4px solid transparent; }
  .corner { grid-row: span 2; display: grid; grid-template-columns: 16px 1fr 1fr; gap: 1px; padding: 1px 1px 1px 0; }
  .swatch { grid-row: span 2; background: #9fd6a3; border: 1px solid #c8efc7; }
  .corner button, .sq, .hscroll button { background: #5a6a6b; border: 1px solid #7d8b8b; border-right-color: #485658; border-bottom-color: #485658; }
  .corner .abc { grid-column: 2 / 4; font: italic 14px/16px "DejaVu Sans", sans-serif; color: #d5dedd; background: #4b5658; }
  .hscroll { display: flex; gap: 1px; padding: 1px 1px 1px 0; }
  .hscroll button { width: 19px; }
  .track { flex: 1; background: #373d45; display: flex; }
  .hscroll .track span { margin-left: 47.700%; width: 34.300%; background: linear-gradient(90deg, transparent calc(100% - 5px), #869494 0 calc(100% - 4px), transparent 0), #5a6a6b; border: 1px solid #8a9999; outline: 1px solid #0b1316; }
  .sq { width: 19px; height: 19px; margin-left: 1px; flex: none; }
  .ruler { position: relative; display: flex; overflow: hidden; background: #04151d; border-bottom: 1px solid #46555d; color: #8fa0a6; }
  .ruler span { flex: none; width: 3.868%; font: 500 12px/19px "Roboto", sans-serif; }
  .ruler .small { font-size: 10px; font-weight: 400; }
  .marker { position: absolute; left: 34.400%; top: 1px; border-top: 9px solid #f2a93b; border-inline: 7px solid transparent; }

  .keys { display: flex; flex-direction: column; border-right: 1px solid #0b1316; background: #0b1316; }
  .keys i { flex: 6; }
  .keys i:first-child { flex: 4; }
  .w { background: linear-gradient(90deg, #b9bcc5, #d9dbe4 60%, #eceef5); }
  .k { background: linear-gradient(90deg, #45474f, #3b3f48); }
  .o { background: linear-gradient(90deg, #f2a55c, #f6c47f); }
  .t { background: linear-gradient(90deg, #d9c6c0, #dfdfe4 60%, #eceef5); }
  .roll, .lane { position: relative; min-width: 0; min-height: 0; }
  .roll > svg:first-child, .lane > svg { width: 100%; height: 100%; }
  .pencil { position: absolute; left: 76.500%; top: 18%; }
  .vscroll { display: flex; flex-direction: column; gap: 1px; min-height: 0; background: #0b1316; }
  .vscroll .track { margin-left: 1px; flex-direction: column; }
  .track .t1, .track .t2 { height: 33px; margin-top: 110px; background: repeating-linear-gradient(#5f6d72 0 3px, #8b989b 3px 4px) 3px 6px / 11px 20px no-repeat, #5a686c; border: 1px solid #86949a; outline: 1px solid #0b1316; margin-right: 1px; }
  .track .t2 { height: 23px; margin-top: 109px; background-size: 13px 12px; background-position: 2px 4px; }
  .splitter { grid-column: 1 / -1; margin: 1px 0; background: #5a6769; border: solid #86928f; border-width: 1px 0; text-align: center; font: 10px/5px "DejaVu Sans", sans-serif; color: #2e3b3e; overflow: hidden; }
  .lane-side { border: 1px solid #7e8c8a; border-right-color: #0b1316; background: linear-gradient(#84928f, #84928f) 1px 34% / 40px 1px no-repeat, linear-gradient(#84928f, #84928f) 1px 84% / 40px 1px no-repeat, #5a6867; }

  footer { height: 40px; flex: none; display: flex; align-items: center; color: #f2f5f7; background: linear-gradient(90deg, #1d2834, #34475c 12%, #3c5470 50%, #2f4a68 75%, #37597b); border-top: 1px solid #0e151c; }
  .task { width: 58px; height: 39px; margin-right: 4px; border: 1px solid transparent; border-radius: 3px; }
  .start { width: 56px; }
  .open { background: linear-gradient(135deg, #8a98a7, #566779 50%, #5f7184); border-color: #a7b4c1; }
  .stack { border-right: 3px double #a7b4c1; }
  .bright { background: linear-gradient(135deg, #d5dce3, #a2b0bf 60%, #b8c4d0); border-color: #dde4ea; }
  .spacer { flex: 1; }
  .recorder { display: flex; align-items: center; justify-content: space-between; width: 116px; height: 25px; padding: 0 4px 0 9px; border: 1px solid #07090b; background: linear-gradient(#5a5c5f, #2a2b2d 11px, #0e0f10 12px, #1c1d1f); }
  .shot { margin-left: 8px; }
  .pause { width: 21px; height: 21px; border-radius: 50%; border: 1px solid #e9a1a1; background: radial-gradient(circle at 50% 30%, #ef7a7d, #c0252e); }
  .tray { display: flex; align-items: center; gap: 8px; margin-left: 6px; }
  .tray svg:first-child { margin-right: 6px; }
  .clock { width: 84px; display: flex; flex-direction: column; align-items: center; font-size: 11px; line-height: 17px; }
  .peek { width: 14px; height: 38px; border: 1px solid #8aa0b5; background: linear-gradient(135deg, #6c849b, #34506c); }
</style>
